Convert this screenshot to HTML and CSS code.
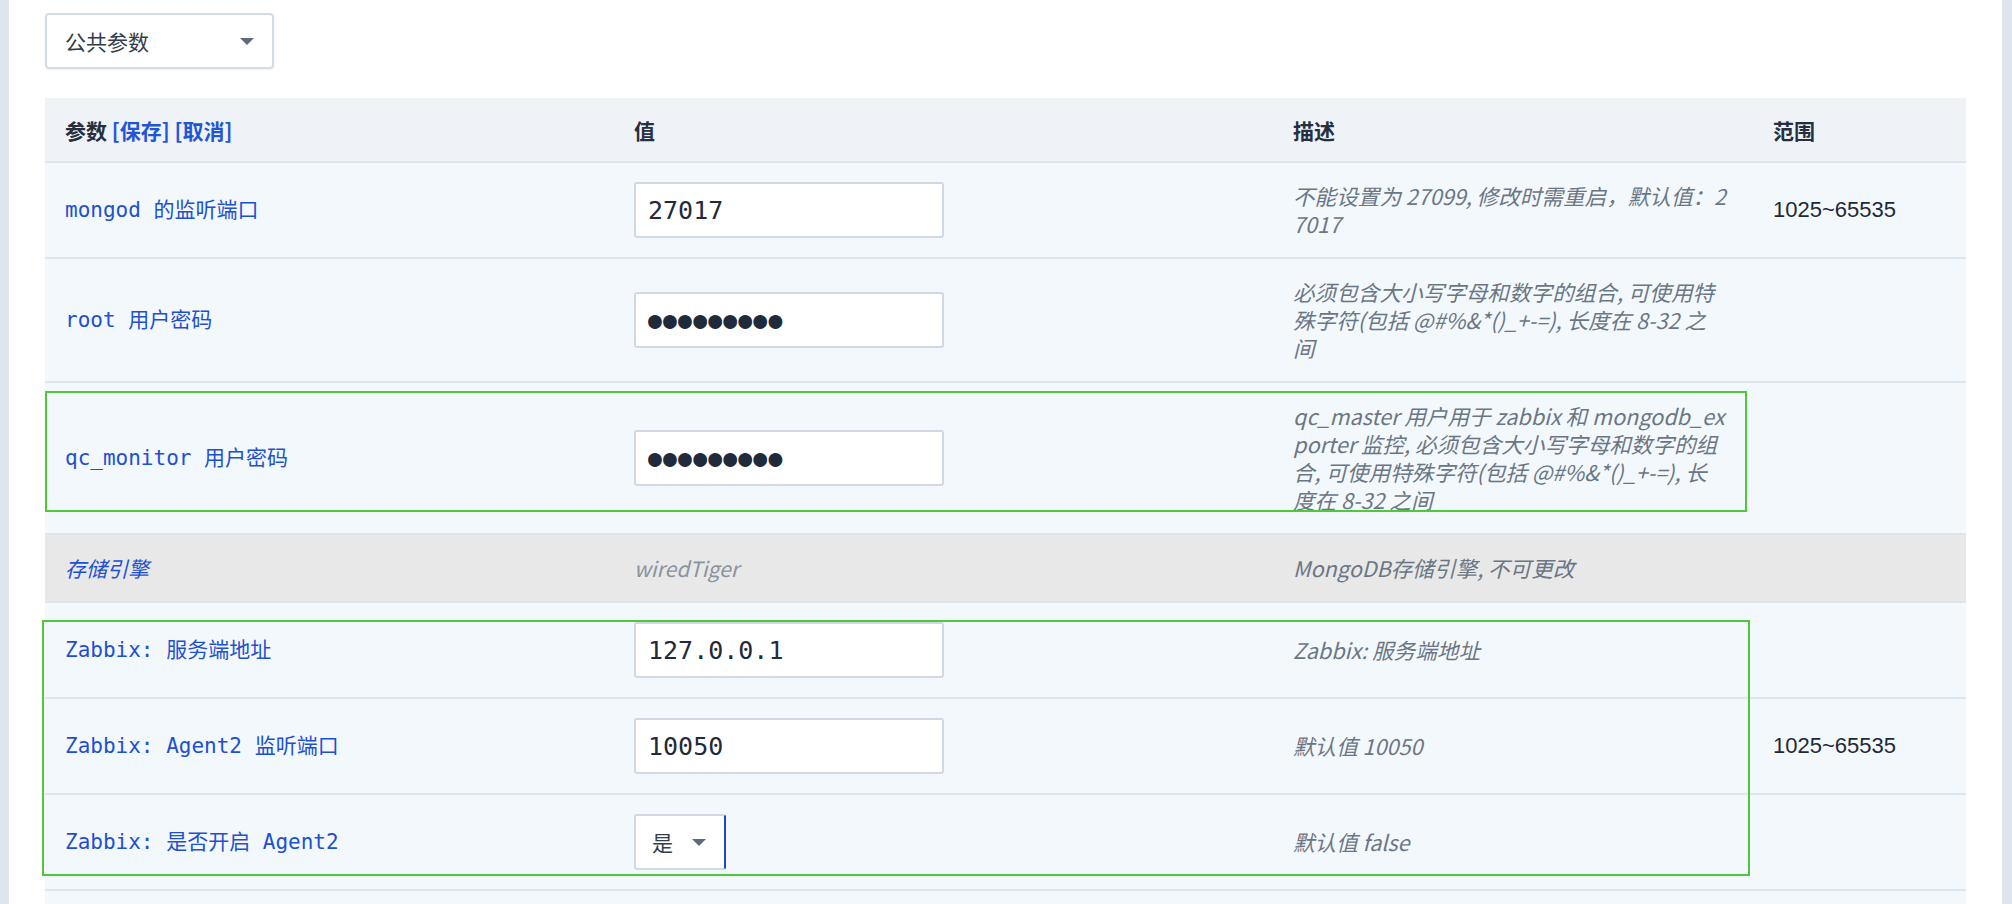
FILE: index.html
```html
<!DOCTYPE html>
<html lang="zh-CN">
<head>
    <meta charset="UTF-8">
    <title>参数配置</title>
    <link rel="stylesheet" href="styles.css">
</head>
<body>
    <div class="page">
        <div class="group-select">
            <span>公共参数</span>
            <span class="caret"></span>
        </div>
        <div class="table-wrap">
            <table class="params">
                <colgroup>
                    <col class="c-name">
                    <col class="c-value">
                    <col class="c-desc">
                    <col class="c-range">
                </colgroup>
                <thead>
                    <tr>
                        <th>参数 <a class="act">[保存]</a> <a class="act">[取消]</a></th>
                        <th>值</th>
                        <th>描述</th>
                        <th>范围</th>
                    </tr>
                </thead>
                <tbody>
                    <tr>
                        <td class="name">mongod 的监听端口</td>
                        <td><input class="field" type="text" value="27017"></td>
                        <td class="desc">不能设置为 27099, 修改时需重启，默认值：2<br>7017</td>
                        <td class="range">1025~65535</td>
                    </tr>
                    <tr>
                        <td class="name">root 用户密码</td>
                        <td><input class="field secret" type="text" value="●●●●●●●●●"></td>
                        <td class="desc">必须包含大小写字母和数字的组合, 可使用特<br>殊字符(包括 @#%&amp;*()_+-=), 长度在 8-32 之<br>间</td>
                        <td class="range"></td>
                    </tr>
                    <tr>
                        <td class="name">qc_monitor 用户密码</td>
                        <td><input class="field secret" type="text" value="●●●●●●●●●"></td>
                        <td class="desc">qc_master 用户用于 zabbix 和 mongodb_ex<br>porter 监控, 必须包含大小写字母和数字的组<br>合, 可使用特殊字符(包括 @#%&amp;*()_+-=), 长<br>度在 8-32 之间</td>
                        <td class="range"></td>
                    </tr>
                    <tr class="locked">
                        <td class="name">存储引擎</td>
                        <td class="fixed">wiredTiger</td>
                        <td class="desc">MongoDB存储引擎, 不可更改</td>
                        <td class="range"></td>
                    </tr>
                    <tr>
                        <td class="name">Zabbix: 服务端地址</td>
                        <td><input class="field" type="text" value="127.0.0.1"></td>
                        <td class="desc">Zabbix: 服务端地址</td>
                        <td class="range"></td>
                    </tr>
                    <tr>
                        <td class="name">Zabbix: Agent2 监听端口</td>
                        <td><input class="field" type="text" value="10050"></td>
                        <td class="desc">默认值 10050</td>
                        <td class="range">1025~65535</td>
                    </tr>
                    <tr>
                        <td class="name">Zabbix: 是否开启 Agent2</td>
                        <td>
                            <div class="mini-select">
                                <span>是</span>
                                <span class="caret"></span>
                            </div>
                        </td>
                        <td class="desc">默认值 false</td>
                        <td class="range"></td>
                    </tr>
                    <tr class="filler">
                        <td></td><td></td><td></td><td></td>
                    </tr>
                </tbody>
            </table>
            <div class="mark mark-one"></div>
            <div class="mark mark-two"></div>
        </div>
    </div>
</body>
</html>
```

FILE: styles.css
```css
body {
    margin: 0;
    background-color: #dfe5ec;
    font-family: "Noto Sans CJK SC", sans-serif;
    font-size: 21px;
    color: #2a3342;
}
.page {
    margin: 0 10px 0 9px;
    background-color: #fff;
    min-height: 904px;
    padding: 13px 36px 0;
    box-sizing: border-box;
}
.group-select {
    width: 229px;
    height: 56px;
    box-sizing: border-box;
    border: 2px solid #d3dbe4;
    border-radius: 4px;
    box-shadow: 0 1px 2px rgba(0, 0, 0, 0.06);
    padding: 0 18px;
    display: flex;
    align-items: center;
    justify-content: space-between;
    color: #333d4a;
}
.caret {
    width: 0;
    height: 0;
    border-left: 7px solid transparent;
    border-right: 7px solid transparent;
    border-top: 7px solid #5f6b7a;
}
.table-wrap {
    position: relative;
    margin-top: 29px;
}
.params {
    width: 1921px;
    border-collapse: collapse;
    table-layout: fixed;
}
.c-name { width: 569px; }
.c-value { width: 659px; }
.c-desc { width: 480px; }
.c-range { width: 213px; }
.params th {
    background-color: #eff3f8;
    text-align: left;
    font-weight: 700;
    line-height: 28px;
    padding: 18px 20px 17px;
    border-bottom: 2px solid #dde5ed;
    color: #252f3f;
}
.params th .act {
    color: #1f56d6;
}
.params td {
    background-color: #f3f8fc;
    padding: 19px 20px;
    line-height: 28px;
    border-bottom: 2px solid #dde5ed;
    vertical-align: middle;
}
.params td.name {
    font-family: "DejaVu Sans Mono", "Noto Sans CJK SC", monospace;
    color: #1d50d2;
}
.params td.desc {
    font-size: 21.6px;
    font-style: italic;
    color: #6b7684;
    white-space: nowrap;
    padding-right: 12px;
}
.params td.range {
    font-family: "Liberation Sans", sans-serif;
    font-size: 22px;
    color: #1f2937;
}
.field {
    display: block;
    width: 310px;
    height: 56px;
    box-sizing: border-box;
    border: 2px solid #d0d9e3;
    border-radius: 3px;
    padding: 0 12px;
    font-family: "DejaVu Sans Mono", monospace;
    font-size: 25px;
    color: #1f2a3a;
    background-color: #fff;
}
.field.secret {
    font-size: 23px;
    letter-spacing: 1.2px;
}
.mini-select {
    width: 92px;
    height: 56px;
    box-sizing: border-box;
    border: 2px solid #d0d9e3;
    border-right: 2px solid #1a49c9;
    border-radius: 3px;
    background-color: #fff;
    padding: 0 18px 0 16px;
    display: flex;
    align-items: center;
    justify-content: space-between;
    color: #333d4a;
}
.locked td {
    background-color: #e8e8e8;
}
.locked td.name {
    font-family: "Noto Sans CJK SC", sans-serif;
    font-style: italic;
}
.locked td.fixed {
    font-style: italic;
    color: #8a939e;
}
.filler td {
    height: 40px;
    padding: 0;
    border-bottom: none;
}
.mark {
    position: absolute;
    border: 2px solid #4fc93a;
    box-sizing: border-box;
    pointer-events: none;
}
.mark-one {
    left: 0;
    top: 293px;
    width: 1702px;
    height: 121px;
}
.mark-two {
    left: -3px;
    top: 522px;
    width: 1708px;
    height: 256px;
}
```
